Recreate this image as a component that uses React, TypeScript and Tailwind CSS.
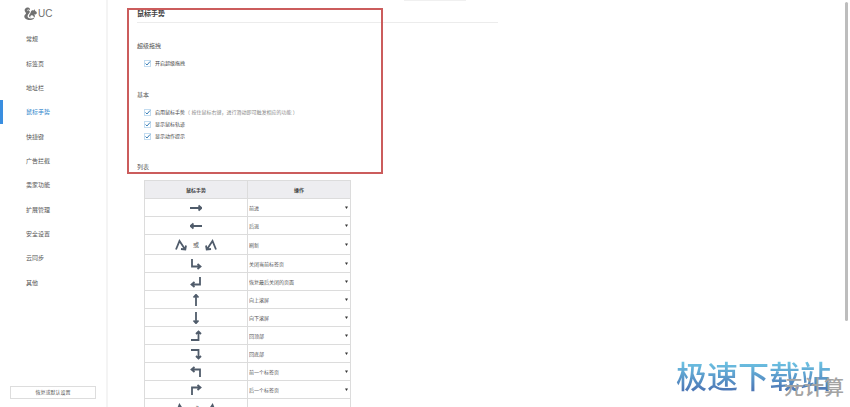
import React from 'react';
import clsx from 'clsx';

const navItems = [
  '常规',
  '标签页',
  '地址栏',
  '鼠标手势',
  '快捷键',
  '广告拦截',
  '卖家功能',
  '扩展管理',
  '安全设置',
  '云同步',
  '其他',
];

const basicOptions = [
  { id: 'enable', label: '启用鼠标手势', hint: '（ 按住鼠标右键，进行滑动即可触发相应的功能 ）' },
  { id: 'track', label: '显示鼠标轨迹' },
  { id: 'tips', label: '显示动作提示' },
];

interface Gesture {
  paths: string[];
  action: string;
}

const RIGHT_PEAK = 'M1 10.5 L4.5 2 L9.5 9.5 M11 6.5 L10.3 10.5 L6 10';
const LEFT_PEAK = 'M11 10.5 L7.5 2 L2.5 9.5 M1 6.5 L1.7 10.5 L6 10';

const gestures: Gesture[] = [
  { paths: ['M0 6 H11 M8.5 3.5 L11.5 6 L8.5 8.5'], action: '前进' },
  { paths: ['M12 6 H1 M3.5 3.5 L0.5 6 L3.5 8.5'], action: '后退' },
  { paths: [RIGHT_PEAK, LEFT_PEAK], action: '刷新' },
  { paths: ['M2 1 V8.5 H10 M7.5 6 L10.5 8.5 L7.5 11'], action: '关闭当前标签页' },
  { paths: ['M10 1 V8.5 H2 M4.5 6 L1.5 8.5 L4.5 11'], action: '恢复最后关闭的页面' },
  { paths: ['M6 12 V1 M3.5 3.5 L6 0.8 L8.5 3.5'], action: '向上滚屏' },
  { paths: ['M6 0 V11 M3.5 8.5 L6 11.2 L8.5 8.5'], action: '向下滚屏' },
  { paths: ['M1 10 H8.5 V2 M6 4 L8.5 1.5 L11 4'], action: '回顶部' },
  { paths: ['M1 2 H8.5 V10 M6 8 L8.5 10.5 L11 8'], action: '回底部' },
  { paths: ['M10 11 V3.5 H2 M4.5 1 L1.5 3.5 L4.5 6'], action: '前一个标签页' },
  { paths: ['M2 11 V3.5 H10 M7.5 1 L10.5 3.5 L7.5 6'], action: '后一个标签页' },
  { paths: [RIGHT_PEAK, LEFT_PEAK], action: '' },
];

function Logo() {
  return (
    <div className="flex h-[27px] items-center gap-px pl-6 text-[#707070]">
      <svg viewBox="0 0 26 26" className="size-[13px]" fill="currentColor" aria-hidden="true">
        <path d="M8 1 C3 1 0 5 2 9 C3 11 5 12 3.500 14 C1 16 0 18 1 21 C3 25 8 26 13 26 C17 26 20 24 21 21 C17 23 11 24 8 21 C6 18 8 15 10 13 C12 11 12 8 10 7 C8 6 7 7 6 8 C6 5 9 4 12 6 C12 3 11 1 8 1 Z" />
        <path d="M14 9 C15 6 18 6 20 7 L21 4 L22.500 8 C25 9 26 11 25.500 13 C24 15 22 15 20 15 C23 17 22 20 20 21 C19 17 17 16 14 17 C12 18 12 20 14 21 C10 21 9 18 11 15 C13 13 13 11 14 9 Z" />
      </svg>
      <span className="text-[10px] leading-3">UC</span>
    </div>
  );
}

function GestureIcon({ d }: { d: string }) {
  return (
    <svg
      viewBox="0 0 12 12"
      className="size-3"
      fill="none"
      stroke="#505c6b"
      strokeWidth="1.8"
      aria-hidden="true"
    >
      <path d={d} />
    </svg>
  );
}

interface CheckOptionProps {
  id: string;
  label: string;
  hint?: string;
}

function CheckOption({ id, label, hint }: CheckOptionProps) {
  return (
    <div className="flex h-3 items-center gap-1 pl-[7px] text-[5px] leading-3">
      <span className="relative flex">
        <input
          id={id}
          type="checkbox"
          defaultChecked
          className="peer size-[7px] appearance-none border border-[#c3dcf0] bg-white"
        />
        <svg
          viewBox="0 0 7 7"
          className="pointer-events-none absolute inset-0 hidden size-[7px] peer-checked:block"
          fill="none"
          stroke="#3a7fb8"
          aria-hidden="true"
        >
          <path d="M1.500 3.500 L3 5 L6 1.500" />
        </svg>
      </span>
      <label htmlFor={id} className="whitespace-nowrap text-[#444]">
        {label}
        {hint && <span className="text-[#888]">{hint}</span>}
      </label>
    </div>
  );
}

function Sidebar() {
  return (
    <aside className="flex w-[108px] shrink-0 flex-col border-r-2 border-[#f4f4f4]">
      <Logo />
      <nav className="grid h-[268px] auto-rows-fr">
        {navItems.map((item) => (
          <a
            key={item}
            href="#"
            className={clsx(
              'flex items-center border-l-3 pl-[23px] text-[6px] leading-3',
              item === '鼠标手势' ? 'border-[#3a8ee0] text-[#2f86cc]' : 'border-transparent text-[#555]'
            )}
          >
            {item}
          </a>
        ))}
      </nav>
      <button
        type="button"
        className="mx-[10px] mt-auto mb-2 h-[13px] border border-[#ddd] bg-white text-[5px] leading-[11px] text-[#555]"
      >
        恢复或默认设置
      </button>
    </aside>
  );
}

function GestureTable() {
  return (
    <table className="mt-[7px] ml-[7px] w-[207px] table-fixed border-collapse text-[5px] leading-3 text-[#555]">
      <thead>
        <tr className="h-[18px] bg-[#ededf0] text-[#444]">
          <th className="border border-[#dcdcdc] p-0 font-bold">鼠标手势</th>
          <th className="border border-[#dcdcdc] p-0 font-bold">操作</th>
        </tr>
      </thead>
      <tbody>
        {gestures.map(({ paths, action }, index) => (
          <tr key={index} className={paths[1] ? 'h-5' : 'h-[18px]'}>
            <td className="border border-[#dcdcdc] p-0">
              <div className="flex items-center justify-center gap-[6px]">
                <GestureIcon d={paths[0]} />
                {paths[1] && (
                  <>
                    <span className="text-[6px]">或</span>
                    <GestureIcon d={paths[1]} />
                  </>
                )}
              </div>
            </td>
            <td className="border border-[#dcdcdc] p-0">
              {action && (
                <div className="relative flex items-center">
                  <select
                    aria-label={action}
                    className="h-3 w-full appearance-none bg-transparent pl-px text-[5px] leading-3"
                  >
                    <option>{action}</option>
                  </select>
                  <svg
                    viewBox="0 0 4 4"
                    className="pointer-events-none absolute right-[2px] size-[3px]"
                    fill="#333"
                    aria-hidden="true"
                  >
                    <path d="M0 0.500 H4 L2 4 Z" />
                  </svg>
                </div>
              )}
            </td>
          </tr>
        ))}
      </tbody>
    </table>
  );
}

export default function App() {
  return (
    <div className="relative flex h-screen overflow-hidden bg-white font-['Liberation_Sans','Noto_Sans_CJK_SC',sans-serif]">
      <Sidebar />

      <main className="w-[390px] shrink-0 pl-[29px] text-[6px] leading-3 text-[#555]">
        <h1 className="border-b border-[#ececec] pt-2 pb-[2px] text-[7px] leading-3 font-bold text-[#444]">
          鼠标手势
        </h1>

        <section className="pt-[17px]">
          <h2>超级拖拽</h2>
          <div className="pt-[5px]">
            <CheckOption id="super-drag" label="开启超级拖拽" />
          </div>
        </section>

        <section className="pt-5">
          <h2>基本</h2>
          <div className="pt-[5px]">
            {basicOptions.map((option) => (
              <CheckOption key={option.id} {...option} />
            ))}
          </div>
        </section>

        <section className="pt-[19px]">
          <h2>列表</h2>
          <GestureTable />
        </section>
      </main>

      {/* Faint edge of the bar above the page */}
      <div className="absolute top-0 left-[404px] h-px w-[62px] bg-[#f0f0f0]" />

      {/* Highlighted area */}
      <div className="pointer-events-none absolute top-2 left-[127px] h-[166px] w-[256px] border-2 border-[#cb5c5c]" />

      {/* Scrollbar thumb */}
      <div className="absolute top-[2px] right-[2px] h-[319px] w-[3px] rounded-full bg-[#bdbdbd]" />

      {/* Watermarks */}
      <div className="absolute right-[19px] bottom-[11px] bg-linear-to-b from-[#6fc8e6] to-[#4668ac] bg-clip-text text-[31px] leading-9 font-medium whitespace-nowrap text-transparent">
        极速下载站
      </div>
      <div className="absolute right-[6px] bottom-[7px] text-[20px] leading-6 font-medium whitespace-nowrap text-[#a3a3a3]">
        元计算
      </div>
    </div>
  );
}
